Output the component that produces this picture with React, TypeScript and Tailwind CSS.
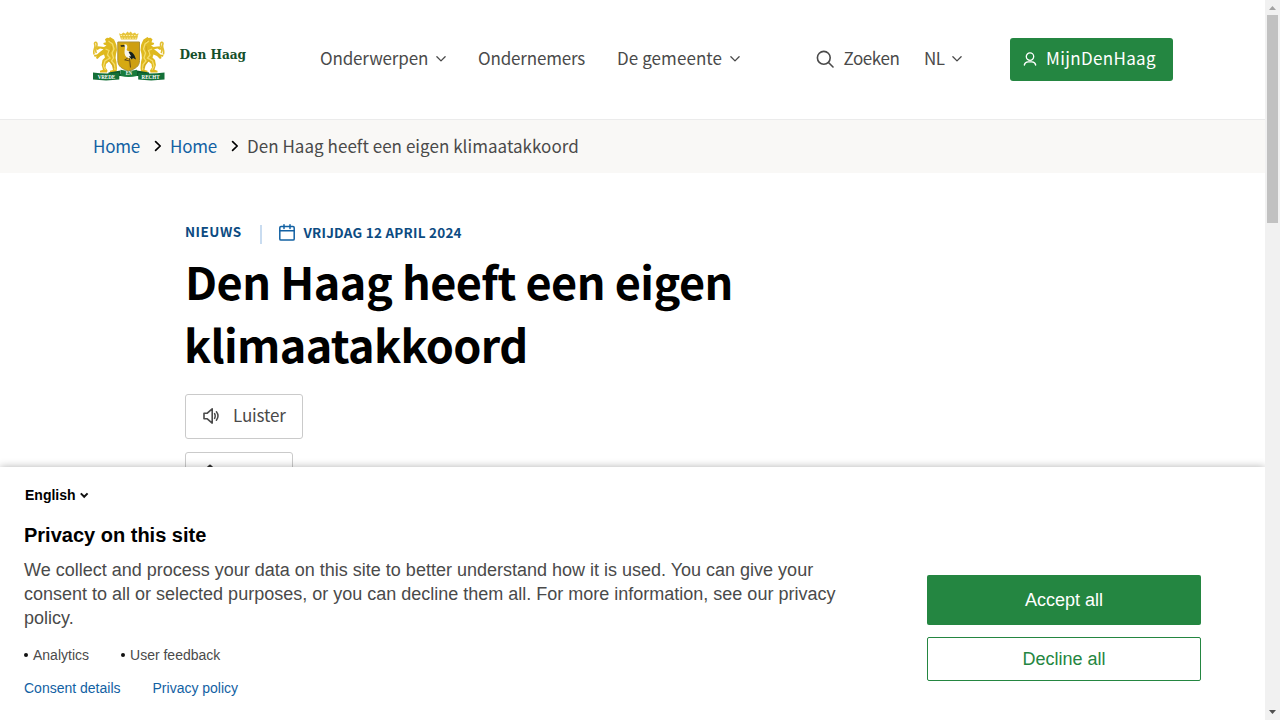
function ChevronDown({ className = "" }: { className?: string }) {
  return (
    <svg className={className} width="10" height="6" viewBox="0 0 10 6" fill="none" stroke="currentColor" strokeWidth="1.3" strokeLinecap="round" strokeLinejoin="round">
      <path d="M0.9 0.8 L5 4.9 L9.1 0.8" />
    </svg>
  );
}

function ChevronRight() {
  return (
    <svg className="-mt-px" width="8" height="12" viewBox="0 0 8 12" fill="none" stroke="#000" strokeWidth="1.7" strokeLinecap="round" strokeLinejoin="round">
      <path d="M1.6 1.6 L6.2 6 L1.6 10.4" />
    </svg>
  );
}

function Lion() {
  return (
    <g>
      <path d="M12 8.2 L14 6.7 L16 7 L17 6 L19 7.2 L21 8.5 L22.2 11 L23.4 14 L24 19 L23 23 L22.6 27 L23.5 31 L24 37 L23.5 41.5 L17 41.5 L17 39.8 L20 39 L19 34.5 L16 30.5 L13 33 L12.5 36.5 L14.5 39.5 L14 41.5 L7 41.5 L7 39.8 L10 38.8 L8.6 34 L9.5 29 L12 26.5 L11 23.6 L7.5 25 L4.5 28 L2.8 27 L3.8 25.5 L1.5 25.8 L1 24 L4 23.4 L7.5 20.5 L10.5 18.3 L7 17.6 L4.5 19 L2.4 17.5 L4.3 16.6 L3.8 15.2 L7.2 15.6 L11 16 L13.5 14.5 L10.8 13.6 L10.3 12 L13 11.3 Z" fill="#dfb91f" />
      <path d="M1.2 23.5 C-.5 19 3 17 1.7 13.5 C1 11.5 2.8 10.4 3.8 12.2 C5.2 16 .8 18 3.5 22" fill="none" stroke="#e2bf31" strokeWidth="1.6" />
      <path d="M15.5 10 L19.5 13 L21 18 L19 22 L20.5 27 L18.5 30 L21.5 33.5 L22 39 M12.5 18 L16 19.5 L14.5 24 L17 27 L12 30 L10.5 35 L12.5 39" fill="none" stroke="#f4dc69" strokeWidth="1.3" />
      <path d="M17 9.3 L18.4 11 M18.4 15 L18 19 L16 22.5 M14.8 29 L18.5 32 L21 37" fill="none" stroke="#c99f20" strokeWidth="0.7" />
    </g>
  );
}

function Crest() {
  return (
    <svg className="-mt-[7px]" width="72" height="50" viewBox="0 0 72 50">
      <Lion />
      <g transform="translate(71.5 0) scale(-1 1)"><Lion /></g>
      <path d="M26 2.2 L28.2 3.2 L30.4 1.4 L32.5 2.8 L34.5 0.6 L36 1.9 L37.8 0.6 L39.5 2.8 L42 1.4 L43.4 3.2 L45.6 2.2 L44 8.5 L28 8.5 Z" fill="#e6c43c" />
      <path d="M27.6 4.5 H44.4 M28.4 7.2 H43.6" stroke="#fff3b0" strokeWidth="0.9" strokeDasharray="1.5 1.2" />
      <path d="M24.8 11 H46.5 V29.5 C46.5 35.5 42 38 35.7 40 C29.4 38 24.8 35.5 24.8 29.5 Z" fill="#d6a912" stroke="#a98f3a" strokeWidth="1" />
      <path d="M35.8 11.5 H46 V29.5 C46 35 42 37.2 35.8 39.3 Z" fill="#c29115" opacity="0.4" />
      <path d="M27.5 14.2 L32 13.9 L32.6 15.5 L28 15.8 Z" fill="#1d211b" />
      <path d="M31.3 13.4 C34.8 12.8 34.8 16.3 33.6 19 C35 20.5 38.5 20 42 26.5 C38.5 28.4 33.8 27.6 32.2 24.6 C30.8 21.5 32 18.2 31.9 16 Z" fill="#f6f5ee" />
      <path d="M35.6 21 C38.4 20 41.4 22.4 43 28.5 L40 27 L38.8 28.6 L35.8 25.6 L38 25.3 Z" fill="#15201c" />
      <path d="M36.2 27 L36.8 30 L37.5 36.5 M36 29.8 L31.7 28.9 L34.8 27" fill="none" stroke="#4b3618" strokeWidth="0.8" />
      <path d="M15.5 41.5 L27.5 39.5 V43 H44 V39.5 L56 41.5 V45 H15.5 Z" fill="#0b5b2d" />
      <path d="M27.5 38.8 Q35.7 41 44 38.8 V45 Q35.7 47 27.5 45 Z" fill="#187b3c" />
      <path d="M0 41.6 Q13 43.2 26.3 41.8 V48.6 Q13 50.2 0 48.6 Z M45.2 41.8 Q58 43.2 71.5 41.6 V48.6 Q58 50.2 45.2 48.6 Z" fill="#147038" />
      <g fill="#fff" fontFamily="Liberation Serif, serif" fontWeight="bold" fontSize="5.4" textAnchor="middle">
        <text x="13.4" y="47.6" textLength="17.5" lengthAdjust="spacingAndGlyphs">VREDE</text>
        <text x="35.8" y="44.4" textLength="6.2" lengthAdjust="spacingAndGlyphs">EN</text>
        <text x="57.6" y="47.6" textLength="18" lengthAdjust="spacingAndGlyphs">RECHT</text>
      </g>
    </svg>
  );
}

function Header() {
  return (
    <header className="flex h-[120px] items-center border-b border-[#ebebeb] bg-white pl-[93px] text-[17px] leading-6 text-[#4a4a4a]">
      <a className="flex w-[227px] items-center">
        <Crest />
        <span className="ml-[14.5px] pb-[11px] font-['DejaVu_Serif_Condensed','DejaVu_Serif',serif] text-[13.5px] leading-5 font-bold tracking-[-0.08px] whitespace-nowrap text-[#154f2b] [font-stretch:condensed]">Den Haag</span>
      </a>
      <nav className="flex w-[496px] items-center">
        <a className="flex w-[158px] items-center gap-2">
          <span className="w-[108px] pb-[3px] tracking-[-0.15px] whitespace-nowrap">Onderwerpen</span>
          <ChevronDown className="-mt-px" />
        </a>
        <a className="w-[139px] pb-[3px] tracking-[-0.17px] whitespace-nowrap">Ondernemers</a>
        <a className="flex items-center gap-2">
          <span className="w-[105px] pb-[3px] tracking-[0.08px] whitespace-nowrap">De gemeente</span>
          <ChevronDown className="-mt-px" />
        </a>
      </nav>
      <a className="flex w-[108px] items-center gap-[9.5px]">
        <svg className="-mt-[2px]" width="18" height="18" viewBox="0 0 18 18" fill="none" stroke="currentColor" strokeWidth="1.6" strokeLinecap="round">
          <circle cx="7.8" cy="7.8" r="6.4" />
          <path d="M12.5 12.5 L17 17" />
        </svg>
        <span className="pb-[3px] tracking-[-0.4px]">Zoeken</span>
      </a>
      <a className="flex w-[86px] items-center gap-2">
        <span className="w-5 pb-[3px] tracking-[-0.5px]">NL</span>
        <ChevronDown className="-mt-px" />
      </a>
      <a className="flex h-[43px] w-[163px] items-center gap-[9px] rounded-[3px] bg-[#248641] pl-[13px] text-white">
        <svg className="-mt-px" width="14" height="14" viewBox="0 0 14 14" fill="none" stroke="currentColor" strokeWidth="1.3" strokeLinecap="round">
          <circle cx="7" cy="4.6" r="3.7" />
          <path d="M1.3 13 C1.8 10.9 3.3 9.9 5 9.9 H9 C10.7 9.9 12.2 10.9 12.7 13" />
        </svg>
        <span className="pb-[3px] tracking-[0.35px]">MijnDenHaag</span>
      </a>
    </header>
  );
}

function Breadcrumb() {
  return (
    <nav className="flex h-[53px] items-center bg-[#f9f8f6] pl-[93px] text-[17px] leading-6">
      <a className="w-[61px] pb-[2px] tracking-[-0.2px] text-[#1261a3]">Home</a>
      <ChevronRight />
      <a className="ml-2 w-[61px] pb-[2px] tracking-[-0.2px] text-[#1261a3]">Home</a>
      <ChevronRight />
      <span className="ml-2 pb-[2px] tracking-[0.04px] text-[#4a4a4a]">Den Haag heeft een eigen klimaatakkoord</span>
    </nav>
  );
}

function Article() {
  return (
    <main className="pt-[50px] pl-[185px]">
      <div className="flex h-[20px] items-center text-[13.5px] leading-5 font-bold text-[#0c4b82]">
        <span className="w-[75px] pb-1 tracking-[0.5px]">NIEUWS</span>
        <span className="mt-[2px] h-[19px] w-[2px] bg-[#c9dcf0]" />
        <svg className="-mt-px ml-[17px]" width="16" height="17" viewBox="0 0 16 17" fill="none" stroke="#1261a3" strokeWidth="1.5" strokeLinecap="round" strokeLinejoin="round">
          <rect x="0.8" y="2.5" width="14.4" height="13.6" rx="1.2" />
          <path d="M1 6.7 H15 M5 0.8 V4.4 M11 0.8 V4.4" />
        </svg>
        <span className="ml-[8.5px] pb-[2px] tracking-[0.23px]">VRIJDAG 12 APRIL 2024</span>
      </div>
      <h1 className="mt-[6px] text-[45px] leading-[63px] font-bold text-black">
        <span className="block tracking-[-0.53px]">Den Haag heeft een eigen</span>
        <span className="-ml-px block tracking-[-0.65px]">klimaatakkoord</span>
      </h1>
      <div className="mt-[19px] flex flex-col items-start gap-[13px] text-[17px] leading-6 text-[#4a4a4a]">
        <button className="flex h-[45px] w-[118px] items-center rounded-[3px] border border-[#cacaca] pl-[17px]">
          <svg className="-mt-px" width="17" height="16" viewBox="0 0 17 16" fill="none" stroke="currentColor" strokeWidth="1.6" strokeLinejoin="round" strokeLinecap="round">
            <path d="M9.2 0.9 V15.1 L4.3 10.8 H1 V5.2 H4.3 Z" />
            <path d="M11.6 5.6 Q12.8 8 11.6 10.4 M13.4 3.8 Q16.6 8 13.4 12.2" strokeWidth="1.5" />
          </svg>
          <span className="ml-[13px] pb-[3px] tracking-[-0.15px]">Luister</span>
        </button>
        <button className="flex h-[45px] w-[108px] rounded-[3px] border border-[#cacaca] pt-[11px] pl-[17px]">
          <svg width="14" height="16" viewBox="0 0 14 16" fill="none" stroke="#333" strokeWidth="2" strokeLinecap="round" strokeLinejoin="round">
            <path d="M3.2 5 L7 1.6 L10.8 5 M7 2 V11" />
          </svg>
        </button>
      </div>
    </main>
  );
}

function ConsentBanner() {
  return (
    <section className="absolute bottom-0 left-0 flex h-[253px] w-[1265px] bg-white pl-6 font-['Liberation_Sans',Arial,sans-serif] text-[#4a4a4a] shadow-[0_0_8px_rgba(0,0,0,0.3)]">
      <div className="w-[903px] pt-5">
        <div className="flex h-4 items-center gap-1 pl-px text-sm leading-4 font-bold text-black">
          English
          <svg className="mt-px" width="9" height="7" viewBox="0 0 9 7" fill="none" stroke="#111" strokeWidth="2">
            <path d="M0.8 1.4 L4.2 4.8 L7.6 1.4" />
          </svg>
        </div>
        <h2 className="mt-5 text-xl leading-6 font-bold text-black">Privacy on this site</h2>
        <p className="mt-[11px] w-[830px] text-lg leading-6">
          We collect and process your data on this site to better understand how it is used. You can give your consent to all or selected purposes, or you can decline them all. For more information, see our privacy policy.
        </p>
        <ul className="mt-[17px] flex gap-8 text-sm leading-4">
          <li className="flex items-center gap-[5px]"><span className="size-1 rounded-full bg-[#111]" />Analytics</li>
          <li className="flex items-center gap-[5px]"><span className="size-1 rounded-full bg-[#111]" />User feedback</li>
        </ul>
        <div className="mt-[17px] flex gap-8 text-sm leading-4 text-[#1261a3]">
          <a>Consent details</a>
          <a>Privacy policy</a>
        </div>
      </div>
      <div className="flex w-[274px] flex-col gap-3 pt-[108px] text-lg">
        <button className="h-[50px] rounded-[2px] bg-[#248641] text-white">Accept all</button>
        <button className="h-11 rounded-[2px] border border-[#248641] bg-white text-[#248641]">Decline all</button>
      </div>
    </section>
  );
}

function Scrollbar() {
  return (
    <div className="relative z-10 flex h-full w-[15px] flex-col items-center bg-[#f1f1f1]">
      <svg width="15" height="15" viewBox="0 0 15 15"><path d="M4 10 H11 L7.5 6 Z" fill="#a3a3a3" /></svg>
      <div className="h-[208px] w-[11px] bg-[#c1c1c1]" />
      <svg className="mt-auto" width="15" height="15" viewBox="0 0 15 15"><path d="M4 5 H11 L7.5 9 Z" fill="#505050" /></svg>
    </div>
  );
}

export default function App() {
  return (
    <div className="relative flex h-[720px] w-[1280px] overflow-hidden bg-white font-['Noto_Sans_CJK_SC','Noto_Sans',sans-serif]">
      <div className="h-full w-[1265px]">
        <Header />
        <Breadcrumb />
        <Article />
      </div>
      <ConsentBanner />
      <Scrollbar />
    </div>
  );
}
